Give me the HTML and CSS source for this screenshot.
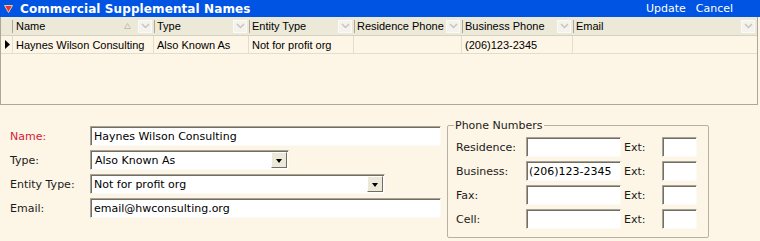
FILE: index.html
```html
<!DOCTYPE html>
<html lang="en">
<head>
  <meta charset="UTF-8">
  <title>Commercial Supplemental Names</title>
  <link rel="stylesheet" href="styles.css">
</head>
<body>
  <div class="titlebar">
    <svg class="collapse" width="9" height="8" viewBox="0 0 9 8">
      <polygon points="0.5,0.5 8.5,0.5 4.5,7.5" fill="#e03a2a" stroke="#f6c0b0" stroke-width="1"/>
    </svg>
    <span class="title">Commercial Supplemental Names</span>
    <span class="actions"><a>Update</a><a>Cancel</a></span>
  </div>

  <div class="grid">
    <div class="row head">
      <div class="cell rowhdr"></div>
      <div class="cell c-name"><span class="lbl">Name</span>
        <svg class="sort" width="7" height="6" viewBox="0 0 7 6"><polygon points="3.5,0.5 6.5,5.5 0.5,5.5" fill="none" stroke="#c4c1b4"/></svg>
        <span class="filter"><svg width="9" height="6" viewBox="0 0 9 6"><polyline points="1,1 4.5,4.5 8,1" fill="none" stroke="#c7c5bc" stroke-width="1.5"/></svg></span>
      </div>
      <div class="cell c-type"><span class="lbl">Type</span>
        <span class="filter"><svg width="9" height="6" viewBox="0 0 9 6"><polyline points="1,1 4.5,4.5 8,1" fill="none" stroke="#c7c5bc" stroke-width="1.5"/></svg></span>
      </div>
      <div class="cell c-entity"><span class="lbl">Entity Type</span>
        <span class="filter"><svg width="9" height="6" viewBox="0 0 9 6"><polyline points="1,1 4.5,4.5 8,1" fill="none" stroke="#c7c5bc" stroke-width="1.5"/></svg></span>
      </div>
      <div class="cell c-res"><span class="lbl">Residence Phone</span>
        <span class="filter"><svg width="9" height="6" viewBox="0 0 9 6"><polyline points="1,1 4.5,4.5 8,1" fill="none" stroke="#c7c5bc" stroke-width="1.5"/></svg></span>
      </div>
      <div class="cell c-bus"><span class="lbl">Business Phone</span>
        <span class="filter"><svg width="9" height="6" viewBox="0 0 9 6"><polyline points="1,1 4.5,4.5 8,1" fill="none" stroke="#c7c5bc" stroke-width="1.5"/></svg></span>
      </div>
      <div class="cell c-email"><span class="lbl">Email</span>
        <span class="filter"><svg width="9" height="6" viewBox="0 0 9 6"><polyline points="1,1 4.5,4.5 8,1" fill="none" stroke="#c7c5bc" stroke-width="1.5"/></svg></span>
      </div>
    </div>
    <div class="row data">
      <div class="cell rowhdr"><svg width="5" height="9" viewBox="0 0 5 9"><polygon points="0,0 5,4.5 0,9" fill="#000"/></svg></div>
      <div class="cell c-name">Haynes Wilson Consulting</div>
      <div class="cell c-type">Also Known As</div>
      <div class="cell c-entity">Not for profit org</div>
      <div class="cell c-res"></div>
      <div class="cell c-bus">(206)123-2345</div>
      <div class="cell c-email"></div>
    </div>
  </div>

  <div class="form">
    <div class="fields">
      <label class="req">Name:</label>
      <div class="input wide">Haynes Wilson Consulting</div>
      <label>Type:</label>
      <div class="select s-type"><span class="val">Also Known As</span><span class="drop"></span></div>
      <label>Entity Type:</label>
      <div class="select s-entity"><span class="val">Not for profit org</span><span class="drop"></span></div>
      <label>Email:</label>
      <div class="input wide">email@hwconsulting.org</div>
    </div>

    <fieldset class="phones">
      <legend>Phone Numbers</legend>
      <div class="phone-grid">
        <label>Residence:</label><div class="input ph"></div><label>Ext:</label><div class="input ext"></div>
        <label>Business:</label><div class="input ph">(206)123-2345</div><label>Ext:</label><div class="input ext"></div>
        <label>Fax:</label><div class="input ph"></div><label>Ext:</label><div class="input ext"></div>
        <label>Cell:</label><div class="input ph"></div><label>Ext:</label><div class="input ext"></div>
      </div>
    </fieldset>
  </div>
</body>
</html>
```

FILE: styles.css
```css
*,*::before,*::after{
  margin: 0;
  padding: 0;
  box-sizing: border-box;
}
body{
  width: 760px;
  height: 241px;
  overflow: hidden;
  background: #fdf5e5;
  font-family: "DejaVu Sans", Verdana, sans-serif;
  font-size: 11px;
  color: #1b1b1b;
}

/* title bar */
.titlebar{
  height: 17px;
  background: #0054e3;
  color: #fff;
  display: flex;
  align-items: center;
  padding-left: 4px;
}
.titlebar .collapse{
  margin-right: 7px;
  margin-top: 1px;
}
.titlebar .title{
  font-weight: bold;
  font-size: 12px;
  letter-spacing: 0.1px;
}
.titlebar .actions{
  margin-left: auto;
  margin-right: 27px;
  display: flex;
  gap: 10px;
}

/* data grid */
.grid{
  width: 758px;
  height: 88px;
  border: 1px solid #aca899;
  border-top: none;
  font-family: "Liberation Sans", Arial, sans-serif;
  font-size: 11px;
  color: #000;
}
.row{
  display: grid;
  grid-template-columns: 12px 141px 95px 105px 108px 111px 1fr;
}
.row.head{
  height: 19px;
  background: #ece9d8;
  border-bottom: 1px solid #d6d2c2;
}
.row.data{
  height: 18px;
  border-bottom: 1px solid #e2ddcd;
}
.head .cell{
  display: flex;
  align-items: center;
  padding-left: 3px;
  padding-right: 2px;
  background: linear-gradient(#aca899, #aca899) left center / 1px 13px no-repeat;
}
.head .cell.rowhdr{
  background: linear-gradient(#aca899, #aca899) right center / 1px 13px no-repeat;
}
.head .cell.c-name{
  background: none;
}
.head .lbl{
  margin-right: auto;
  white-space: nowrap;
}
.head .sort{
  margin-right: 7px;
}
.filter{
  width: 14px;
  height: 13px;
  background: #f3f2ec;
  border: 1px solid #fbfaf6;
  display: flex;
  align-items: center;
  justify-content: center;
}
.data .cell{
  display: flex;
  align-items: center;
  padding-left: 3px;
  border-right: 1px solid #e2ddcd;
  white-space: nowrap;
  overflow: hidden;
}
.data .cell.rowhdr{
  padding-left: 4px;
}
.data .cell.c-email{
  border-right: none;
}

/* edit form */
.form{
  display: flex;
  gap: 6px;
  padding-left: 10px;
}
.fields{
  margin-top: 21px;
  display: grid;
  grid-template-columns: 80px 351px;
  grid-auto-rows: 20px;
  row-gap: 4px;
  align-items: center;
}
label{
  color: #1b1b1b;
}
label.req{
  color: #d8173c;
}
.input{
  height: 20px;
  background: #fff;
  border: 1px solid;
  border-color: #a6a396 #fbfaf5 #fbfaf5 #a6a396;
  box-shadow: inset 1px 1px 0 #716f64;
  padding: 1px 0 0 3px;
  display: flex;
  align-items: center;
  white-space: nowrap;
  color: #000;
}
.input.wide{
  width: 351px;
}
.select{
  height: 20px;
  background: #fff;
  border: 1px solid;
  border-color: #a6a396 #fbfaf5 #fbfaf5 #a6a396;
  box-shadow: inset 1px 1px 0 #716f64;
  display: flex;
  align-items: center;
  padding: 1px 1px 1px 3px;
  color: #000;
}
.select.s-type{
  width: 199px;
}
.select.s-type .val{
  padding-left: 1px;
}
.select.s-entity{
  width: 295px;
}
.select .val{
  margin-right: auto;
}
.select .drop{
  width: 16px;
  height: 16px;
  background: #ece9d8;
  border: 1px solid;
  border-color: #fff #716f64 #716f64 #fff;
  display: flex;
  align-items: center;
  justify-content: center;
}
.select .drop::after{
  content: "";
  border-left: 3.5px solid transparent;
  border-right: 3.5px solid transparent;
  border-top: 4px solid #000;
  margin-top: 1px;
}

/* phone numbers group */
.phones{
  margin-top: 14px;
  width: 262px;
  height: 119px;
  border: 1px solid #b5b2a3;
  border-radius: 2px;
  padding: 5px 0 0 8px;
}
.phones legend{
  padding: 0 1px 0 1px;
  margin-left: -2px;
  color: #1b1b1b;
}
.phone-grid{
  display: grid;
  grid-template-columns: 70px 95px 41px 35px;
  grid-auto-rows: 20px;
  row-gap: 4px;
  align-items: center;
}
.phone-grid label:nth-child(4n+3){
  padding-left: 3px;
}
.input.ph{
  padding-left: 2px;
}
```
